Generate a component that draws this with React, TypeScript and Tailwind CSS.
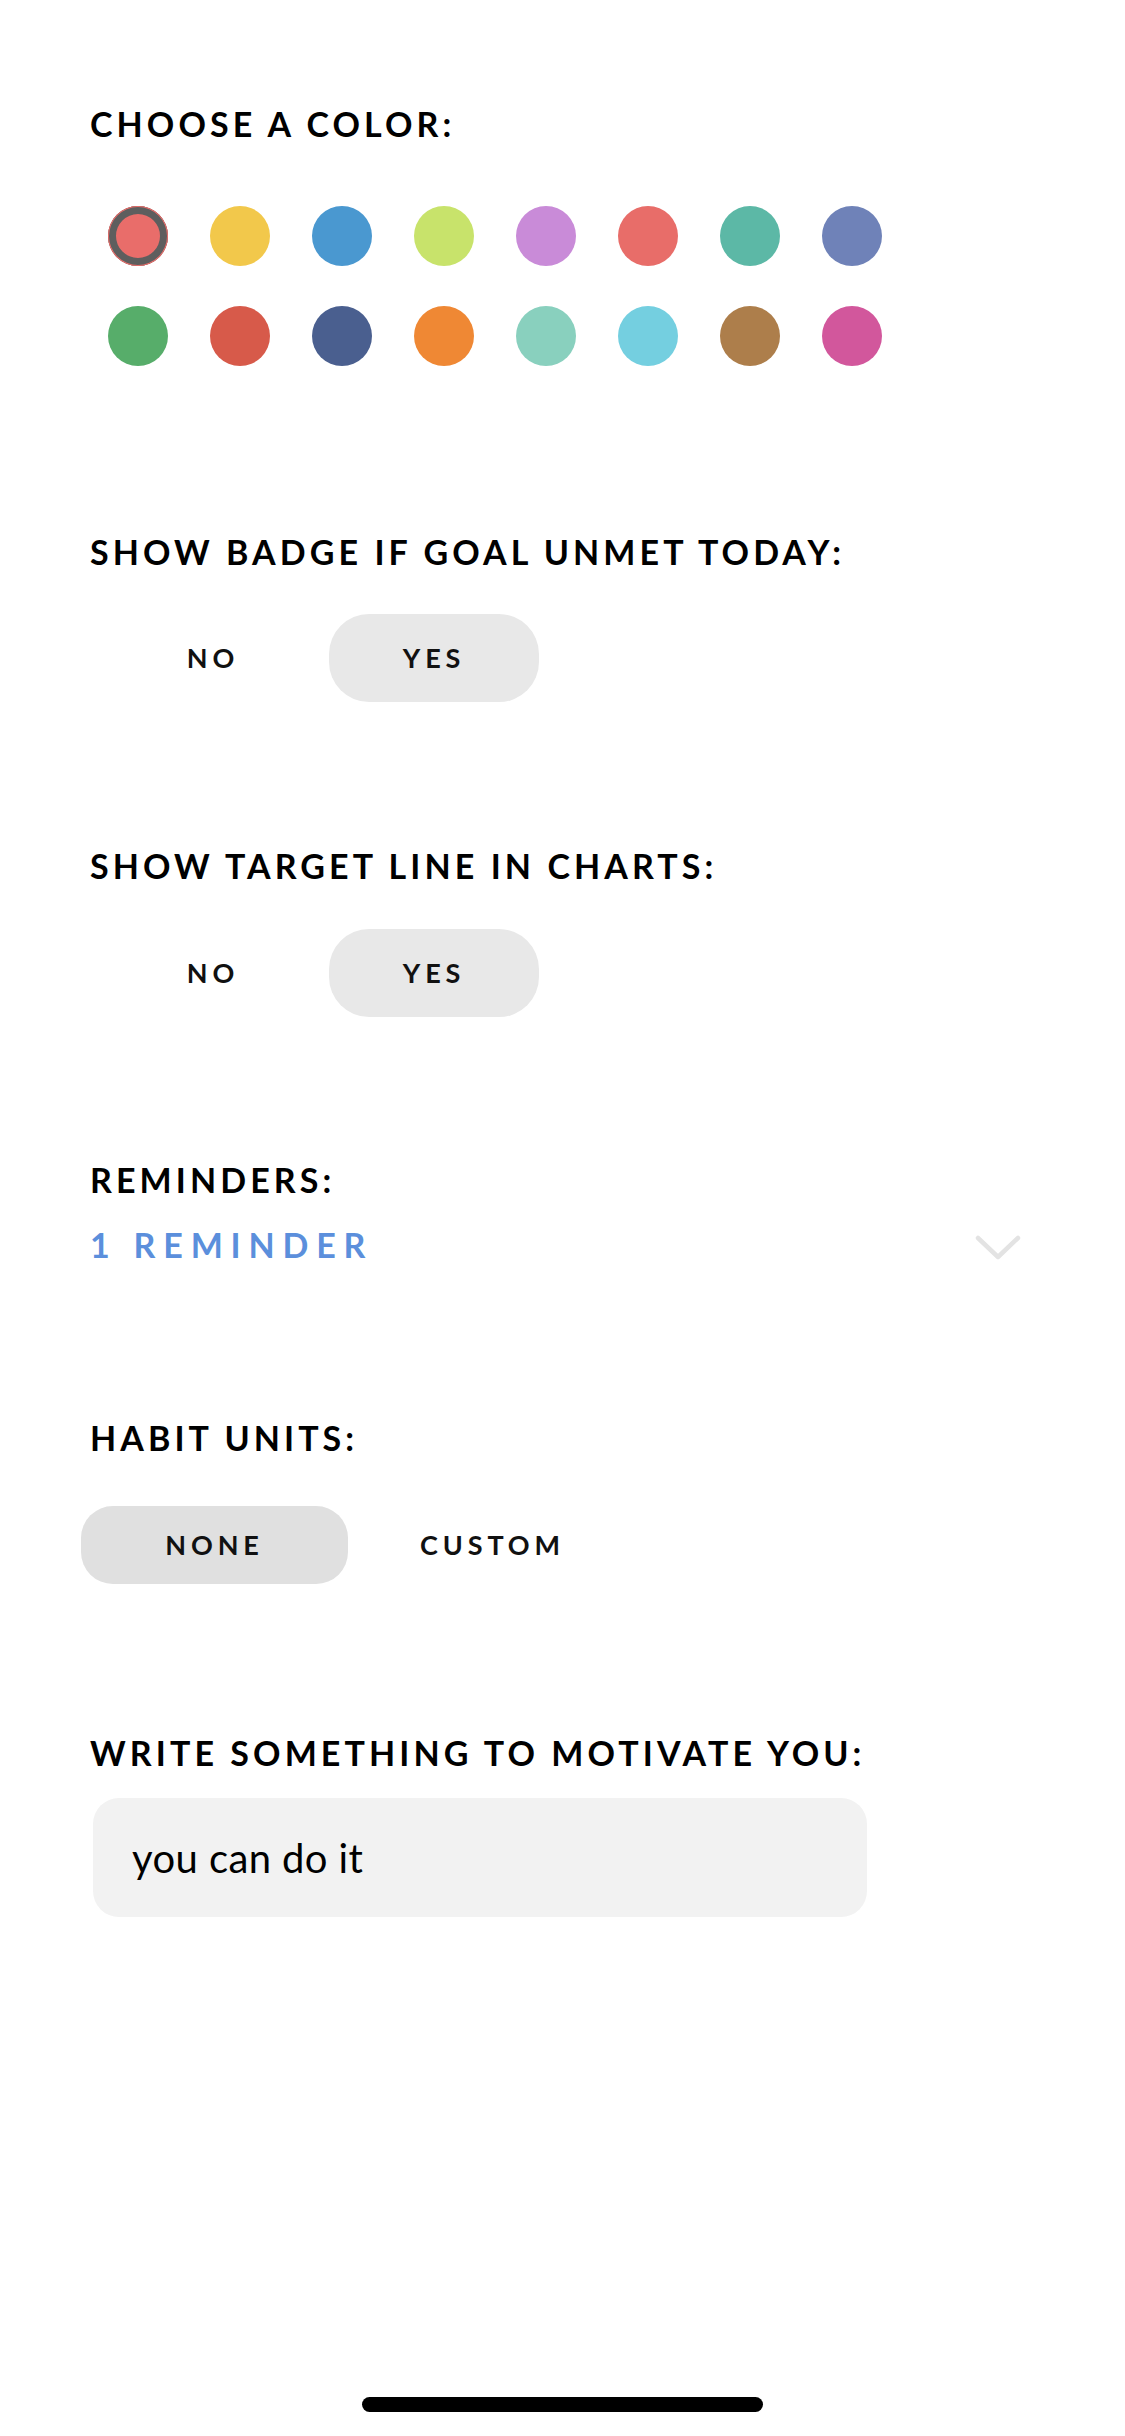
import { useState } from "react";

const ROW1 = ["#e96d6a", "#f2c84b", "#4a98d0", "#c8e36b", "#c98bd8", "#e86d69", "#5cb8a6", "#6f82b8"];
const ROW2 = ["#57ad6a", "#d75a4a", "#4a5f8f", "#ef8834", "#89d0be", "#74cfe0", "#ad7e4b", "#d2579c"];

const font = { fontFamily: '"Lato", "Noto Sans", sans-serif' };

function Heading({ children, className = "" }: { children: React.ReactNode; className?: string }) {
  return (
    <div className={`text-[34px] leading-[40px] font-bold tracking-[0.12em] text-black ${className}`}>
      {children}
    </div>
  );
}

function Toggle({ value, onChange }: { value: boolean; onChange: (v: boolean) => void }) {
  return (
    <div className="flex gap-[11px] ml-[18px]">
      {["NO", "YES"].map((label) => {
        const active = (label === "YES") === value;
        return (
          <button
            key={label}
            onClick={() => onChange(label === "YES")}
            className={`w-[210px] h-[88px] rounded-[40px] text-[27px] font-bold tracking-[0.18em] text-[#111] ${
              active ? "bg-[#e8e8e8]" : "bg-transparent"
            }`}
          >
            {label}
          </button>
        );
      })}
    </div>
  );
}

export default function App() {
  const [color, setColor] = useState("0-0");
  const [badge, setBadge] = useState(true);
  const [target, setTarget] = useState(true);
  const [units, setUnits] = useState("NONE");
  const [text, setText] = useState("you can do it");

  return (
    <div className="min-h-[2436px] w-[1125px] bg-white relative" style={font}>
      <div className="pl-[90px] pt-[104px]">
        <Heading>CHOOSE A COLOR:</Heading>

        <div className="ml-[18px] mt-[62px] flex flex-col gap-[40px]">
          {[ROW1, ROW2].map((row, r) => (
            <div key={r} className="flex gap-x-[42px]">
              {row.map((c, i) => {
                const key = `${r}-${i}`;
                return (
                  <button
                    key={key}
                    onClick={() => setColor(key)}
                    className={`w-[60px] h-[60px] rounded-full shrink-0 ${
                      color === key ? "shadow-[inset_0_0_0_1px_#e96d6a,inset_0_0_0_8px_#5e5e5e]" : ""
                    }`}
                    style={{ backgroundColor: c }}
                  />
                );
              })}
            </div>
          ))}
        </div>

        <Heading className="mt-[166px]">SHOW BADGE IF GOAL UNMET TODAY:</Heading>
        <div className="mt-[42px]">
          <Toggle value={badge} onChange={setBadge} />
        </div>

        <Heading className="mt-[144px]">SHOW TARGET LINE IN CHARTS:</Heading>
        <div className="mt-[43px]">
          <Toggle value={target} onChange={setTarget} />
        </div>

        <Heading className="mt-[143px]">REMINDERS:</Heading>
        <div className="mt-[25px] flex items-center justify-between pr-[104px]">
          <span className="text-[34px] leading-[40px] font-bold tracking-[0.23em] text-[#5b8fdc]">1 REMINDER</span>
          <svg width="46" height="26" viewBox="0 0 46 26" fill="none" className="mt-[6px]">
            <path d="M3 3 L23 22 L43 3" stroke="#e3e3e3" strokeWidth="4.5" strokeLinecap="round" strokeLinejoin="round" />
          </svg>
        </div>

        <Heading className="mt-[153px]">HABIT UNITS:</Heading>
        <div className="mt-[48px] ml-[-9px] flex gap-[11px]">
          {["NONE", "CUSTOM"].map((u) => (
            <button
              key={u}
              onClick={() => setUnits(u)}
              className={`w-[267px] h-[78px] rounded-[32px] text-[27px] font-bold tracking-[0.18em] text-[#111] ${
                units === u ? "bg-[#e0e0e0]" : "bg-transparent"
              }`}
            >
              {u}
            </button>
          ))}
        </div>

        <Heading className="mt-[149px]">WRITE SOMETHING TO MOTIVATE YOU:</Heading>
        <div className="mt-[25px] ml-[3px] w-[774px] h-[119px] rounded-[26px] bg-[#f2f2f2] flex items-center">
          <input
            value={text}
            onChange={(e) => setText(e.target.value)}
            className="w-full bg-transparent outline-none pl-[39px] text-[40px] tracking-[0.01em] text-black"
            style={font}
          />
        </div>
      </div>

      <div className="absolute left-[362px] top-[2397px] w-[401px] h-[15px] rounded-full bg-black" />
    </div>
  );
}
